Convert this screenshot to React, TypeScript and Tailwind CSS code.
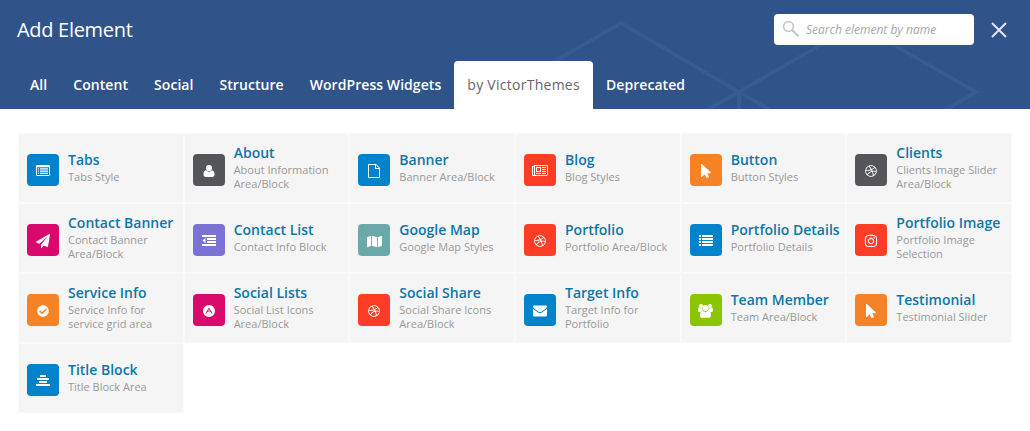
import type { ReactNode } from 'react';
import { FaCheckCircle, FaDribbble, FaInstagram, FaMap } from 'react-icons/fa';

const Glyph = ({ children, w = 16 }: { children: ReactNode; w?: number }) => (
  <svg width={w} height="14" viewBox={`0 0 ${w} 14`} fill="currentColor" className="block">
    {children}
  </svg>
);

const ListAlt = () => (
  <Glyph w={14}>
    <path fillRule="evenodd" d="M1 1h12a1 1 0 0 1 1 1v9a1 1 0 0 1-1 1H1a1 1 0 0 1-1-1V2a1 1 0 0 1 1-1zM1 3.200V11h12V3.200z" />
    <path d="M2 4.200h1v1.200H2zM4 4.200h8v1.200H4zM2 6.500h1v1.200H2zM4 6.500h8v1.200H4zM2 8.800h1V10H2zM4 8.800h8V10H4z" />
  </Glyph>
);
const User = () => (
  <Glyph w={12}>
    <circle cx="6" cy="4" r="3.100" />
    <path d="M3 6.300c.8.900 1.800 1.400 3 1.400s2.200-.5 3-1.400c1.800.1 2.500 2 2.500 4.300 0 1.500-.9 2.400-2.200 2.400H2.700C1.400 13 .5 12.100.5 10.600.5 8.300 1.200 6.400 3 6.300z" />
  </Glyph>
);
const FileO = () => (
  <Glyph w={12}>
    <path fillRule="evenodd" d="M.75 0H8l4 4v9.250c0 .4-.3.750-.750.750H.750A.75.75 0 0 1 0 13.250V.75C0 .3.300 0 .75 0zM1 1v12h10V5H7.750A.75.75 0 0 1 7 4.250V1zm7 .100V4h2.900z" />
  </Glyph>
);
const Newspaper = () => (
  <Glyph>
    <path fillRule="evenodd" d="M2 1h14v9.500c0 .8-.7 1.500-1.500 1.500h-13A1.500 1.500 0 0 1 0 10.500V2h2zM1 3v7.500c0 .3.200.5.500.5s.5-.2.500-.5V3zm2-1v9h11.500c.3 0 .5-.2.500-.5V2z" />
    <path fillRule="evenodd" d="M4 3h5v5H4zm1 1v3h3V4z" />
    <path d="M4 9h5v1H4zM10 3h4v1h-4zM10 5h4v1h-4zM10 7h4v1h-4zM10 9h4v1h-4z" />
  </Glyph>
);
const Pointer = () => (
  <Glyph w={10}>
    <path d="M.3 0c.2-.1.400 0 .6.100l8.800 8.100c.4.400.1 1-.4 1H6.200l1.700 3.400c.1.300 0 .6-.3.700l-1.700.7c-.3.100-.6 0-.7-.3L3.600 10.300.9 12.900c-.3.300-.9.100-.9-.4V.5C0 .300.1.100.300 0z" />
  </Glyph>
);
const PaperPlane = () => (
  <Glyph w={14}>
    <path d="M13.800.1c.2.100.2.300.2.500l-2 12c-.1.300-.4.500-.7.400L7.800 11.500 5.900 13.800c-.3.400-.9.200-.9-.3v-2.800L11.700 2.500 3.400 9.700.3 8.400c-.4-.2-.4-.7 0-.9l13-7.500c.2-.1.400-.1.500.1z" />
  </Glyph>
);
const Outdent = () => (
  <Glyph w={14}>
    <path d="M0 1h14v2H0zM5 4h9v2H5zM5 7h9v2H5zM0 10h14v2H0zM3.500 3.800v5.400L.5 6.500z" />
  </Glyph>
);
const List = () => (
  <Glyph w={14}>
    <path d="M0 1h2v2H0zM3 1h11v2H3zM0 4h2v2H0zM3 4h11v2H3zM0 7h2v2H0zM3 7h11v2H3zM0 10h2v2H0zM3 10h11v2H3z" />
  </Glyph>
);
const CircleTriangle = () => (
  <Glyph w={12}>
    <path fillRule="evenodd" d="M6 1a6 6 0 1 1 0 12A6 6 0 0 1 6 1zm0 2.600L2.300 9.400h1l.9-1.400L6 7.200 7.800 8l.9 1.400h1zm0 1.300 1.300 2L6 6.300l-1.300.6z" />
  </Glyph>
);
const Envelope = () => (
  <Glyph w={14}>
    <path d="M0 4.700c.3.300.5.500.9.700l4.200 3c.6.400 1.200.8 1.900.8s1.300-.4 1.900-.8l4.200-3c.3-.2.6-.4.900-.7v6.600c0 .7-.6 1.200-1.200 1.200H1.200A1.200 1.200 0 0 1 0 11.300zM1.200 1.500h11.600c.7 0 1.200.5 1.200 1.100 0 .8-.6 1.500-1.200 2L8.700 7.500c-.5.300-1.100.8-1.700.8s-1.200-.5-1.700-.8L1.200 4.600C.7 4.200 0 3.400 0 2.800c0-.8.400-1.300 1.200-1.300z" />
  </Glyph>
);
const Users = () => (
  <Glyph w={15}>
    <circle cx="3" cy="2" r="2" />
    <circle cx="12" cy="2" r="2" />
    <circle cx="7.500" cy="4" r="3" />
    <path d="M1.200 3.500c.5.600 1.800 1 3 .7-.1 1.100.2 2 .8 2.800-.9 0-1.600.4-2.100 1H1.500C.7 8 0 7.500 0 6.700c0-1 .1-3.200 1.200-3.200zM13.800 3.500c-.5.600-1.800 1-3 .7.1 1.100-.2 2-.8 2.800.9 0 1.600.4 2.100 1h1.400c.8 0 1.500-.5 1.500-1.300 0-1-.1-3.200-1.200-3.200z" />
    <path d="M4.600 6.500c.8.800 1.700 1.300 2.900 1.300s2.100-.5 2.900-1.300C12.300 6.600 13 8.900 13 11.200c0 1.600-.9 2.600-2.300 2.600H4.300C2.900 13.800 2 12.800 2 11.200 2 8.900 2.700 6.600 4.600 6.500z" />
  </Glyph>
);
const AlignCenter = () => (
  <Glyph w={14}>
    <path d="M4 1h6v2H4zM1 4h12v2H1zM3 7h8v2H3zM0 10h14v2H0z" />
  </Glyph>
);

type Item = { title: string; lines: string[]; color: string; icon: ReactNode };

const blue = 'bg-[#0083ca]';
const gray = 'bg-[#54565a]';
const red = 'bg-[#ff3d27]';
const orange = 'bg-[#f58225]';
const pink = 'bg-[#d9086c]';
const purple = 'bg-[#7a72d4]';
const teal = 'bg-[#6ba8a9]';
const green = 'bg-[#8bc500]';

const items: Item[] = [
  { title: 'Tabs', lines: ['Tabs Style'], color: blue, icon: <ListAlt /> },
  { title: 'About', lines: ['About Information', 'Area/Block'], color: gray, icon: <User /> },
  { title: 'Banner', lines: ['Banner Area/Block'], color: blue, icon: <FileO /> },
  { title: 'Blog', lines: ['Blog Styles'], color: red, icon: <Newspaper /> },
  { title: 'Button', lines: ['Button Styles'], color: orange, icon: <Pointer /> },
  { title: 'Clients', lines: ['Clients Image Slider', 'Area/Block'], color: gray, icon: <FaDribbble size={12} /> },
  { title: 'Contact Banner', lines: ['Contact Banner', 'Area/Block'], color: pink, icon: <PaperPlane /> },
  { title: 'Contact List', lines: ['Contact Info Block'], color: purple, icon: <Outdent /> },
  { title: 'Google Map', lines: ['Google Map Styles'], color: teal, icon: <FaMap size={15} /> },
  { title: 'Portfolio', lines: ['Portfolio Area/Block'], color: red, icon: <FaDribbble size={12} /> },
  { title: 'Portfolio Details', lines: ['Portfolio Details'], color: blue, icon: <List /> },
  { title: 'Portfolio Image', lines: ['Portfolio Image', 'Selection'], color: red, icon: <FaInstagram size={14} /> },
  { title: 'Service Info', lines: ['Service Info for', 'service grid area'], color: orange, icon: <FaCheckCircle size={12} /> },
  { title: 'Social Lists', lines: ['Social List Icons', 'Area/Block'], color: pink, icon: <CircleTriangle /> },
  { title: 'Social Share', lines: ['Social Share Icons', 'Area/Block'], color: red, icon: <FaDribbble size={12} /> },
  { title: 'Target Info', lines: ['Target Info for', 'Portfolio'], color: blue, icon: <Envelope /> },
  { title: 'Team Member', lines: ['Team Area/Block'], color: green, icon: <Users /> },
  { title: 'Testimonial', lines: ['Testimonial Slider'], color: orange, icon: <Pointer /> },
  { title: 'Title Block', lines: ['Title Block Area'], color: blue, icon: <AlignCenter /> },
];

const tabs = ['All', 'Content', 'Social', 'Structure', 'WordPress Widgets', 'by VictorThemes', 'Deprecated'];

export default function App() {
  return (
    <div className="h-[431px] w-[1030px] overflow-hidden bg-white font-['Open_Sans',sans-serif]">
      <header className="relative flex h-[109px] flex-col justify-between bg-[#305389]">
        <svg
          className="absolute inset-0"
          width="1030"
          height="109"
          fill="none"
          stroke="#375b92"
          strokeWidth="4"
        >
          <path d="M470 110 621 23 775 113M702 113 857 24 976 92 940 113M739 92V109" />
        </svg>
        <div className="relative flex h-[59px] items-center pr-[23px] pl-[17px]">
          <h1 className="flex-1 text-[20px] leading-[28px] tracking-[-0.3px] text-white">Add Element</h1>
          <label className="flex h-[31px] w-[200px] items-center rounded-[4px] bg-white pl-2">
            <svg width="18" height="18" viewBox="0 0 18 18" fill="none" stroke="#c3c6cc" strokeWidth="1.700" className="-mt-[2px]">
              <circle cx="6.500" cy="6.500" r="4.900" />
              <path d="m10 10 6.500 6.300" strokeWidth="2.200" />
            </svg>
            <input
              placeholder="Search element by name"
              className="ml-[6px] w-[160px] bg-transparent text-[12px] italic outline-none placeholder:text-[#a8a8a8]"
            />
          </label>
          <button className="ml-[17px]" aria-label="Close">
            <svg width="16" height="16" viewBox="0 0 16 16" stroke="#e1e7f6" strokeWidth="2" className="block">
              <path d="m1 1 14 14M15 1 1 15" />
            </svg>
          </button>
        </div>
        <nav className="relative flex h-[48px] pl-[17px] text-[14px] leading-[48px]">
          {tabs.map((tab) => (
            <button
              key={tab}
              className={
                tab === 'by VictorThemes'
                  ? 'rounded-t-[4px] bg-white px-[13px] tracking-[0.27px] text-[#666]'
                  : 'px-[13px] font-semibold tracking-[0.06px] text-white'
              }
            >
              {tab}
            </button>
          ))}
        </nav>
      </header>
      <main className="grid grid-cols-6 px-[18px] pt-[24px]">
        {items.map((item) => (
          <div
            key={item.title}
            className="flex h-[70px] items-center border border-[#fafafa] bg-[#f5f5f5] pt-[4px] pl-[8px]"
          >
            <div className={`flex size-8 shrink-0 items-center justify-center rounded-[4px] pt-[2px] text-white ${item.color}`}>
              {item.icon}
            </div>
            <div className="ml-[9px] pb-[6px] whitespace-nowrap">
              <div className="text-[14px] leading-[20px] font-semibold text-[#0e76a8]">{item.title}</div>
              {item.lines.map((line) => (
                <div key={line} className="text-[11px] leading-[14px] text-[#999]">
                  {line}
                </div>
              ))}
            </div>
          </div>
        ))}
      </main>
    </div>
  );
}
